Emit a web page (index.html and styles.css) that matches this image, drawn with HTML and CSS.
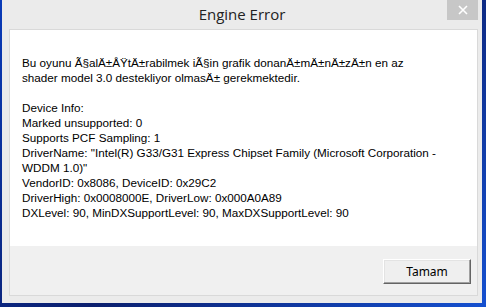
FILE: index.html
```html
<!DOCTYPE html>
<html lang="en">
<head>
    <meta charset="UTF-8">
    <title>Engine Error</title>
    <link rel="stylesheet" href="styles.css">
</head>
<body>
    <div class="window">
        <div class="titlebar">
            <span class="title">Engine Error</span>
            <button class="close" aria-label="Close">
                <svg width="10" height="10" viewBox="0 0 10 10"><path d="M1 1L9 9M9 1L1 9" stroke="#fff" stroke-width="1.6"/></svg>
            </button>
        </div>
        <div class="panel">
            <div class="message">
                <p>Bu oyunu Ã§alÄ±ÅŸtÄ±rabilmek iÃ§in grafik donanÄ±mÄ±nÄ±zÄ±n en az<br>shader model 3.0 destekliyor olmasÄ± gerekmektedir.</p>
                <p>Device Info:<br>
                Marked unsupported: 0<br>
                Supports PCF Sampling: 1<br>
                DriverName: "Intel(R) G33/G31 Express Chipset Family (Microsoft Corporation -<br>
                WDDM 1.0)"<br>
                VendorID: 0x8086, DeviceID: 0x29C2<br>
                DriverHigh: 0x0008000E, DriverLow: 0x000A0A89<br>
                DXLevel: 90, MinDXSupportLevel: 90, MaxDXSupportLevel: 90</p>
            </div>
            <div class="footer">
                <button class="ok">Tamam</button>
            </div>
        </div>
    </div>
</body>
</html>
```

FILE: styles.css
```css
body {
    margin: 0;
    height: 307px;
    overflow: hidden;
    background: linear-gradient(135deg, #0a3bb8, #0b1f6e 50%, #1550d0);
}
.window {
    box-sizing: border-box;
    width: 480px;
    height: 303px;
    margin-left: 2px;
    background-color: #ebebeb;
    display: flex;
    flex-direction: column;
}
.titlebar {
    position: relative;
    height: 29px;
    display: flex;
    justify-content: center;
    align-items: center;
}
.title {
    font-family: "Open Sans", "Noto Sans", sans-serif;
    font-size: 15px;
    color: #222;
    margin-top: -1px;
}
.close {
    position: absolute;
    top: 0;
    right: 4px;
    width: 31px;
    height: 20px;
    border: none;
    padding: 0;
    background-color: #c7c7c7;
    display: flex;
    justify-content: center;
    align-items: center;
}
.panel {
    flex: 1;
    margin: 0 4px 7px 7px;
    border: 1px solid #d9d9d9;
    display: flex;
    flex-direction: column;
}
.message {
    flex: 1;
    background-color: #fff;
    padding: 25px 12px 0;
    font-family: "Liberation Sans", Arial, sans-serif;
    font-size: 11.7px;
    line-height: 15px;
    color: #000;
}
.message p {
    margin: 0 0 15px;
}
.footer {
    height: 49px;
    background-color: #f0f0f0;
    display: flex;
    justify-content: flex-end;
    align-items: flex-start;
}
.ok {
    margin: 13px 6px 0 0;
    width: 88px;
    height: 25px;
    background-color: #efefef;
    border: 1px solid;
    border-color: #fff #646464 #646464 #fff;
    box-shadow: inset -1px -1px 0 #a0a0a0, inset 1px 1px 0 #e3e3e3;
    font-family: "Noto Sans", sans-serif;
    font-size: 12px;
    color: #000;
    padding: 0;
}
```
